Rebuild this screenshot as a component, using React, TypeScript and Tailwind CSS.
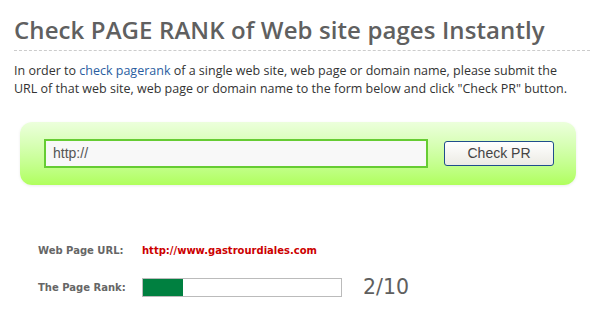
export default function App() {
  const rank = 2;
  return (
    <div className="w-[609px] h-[321px] bg-white overflow-hidden" style={{ fontFamily: '"DejaVu Sans", Verdana, sans-serif' }}>
      <div className="px-[14px] pt-[12px]">
        <h1 className="text-[24px] leading-[36px] font-semibold text-[#606060] font-['Open_Sans',sans-serif] tracking-[0.1px]">
          Check PAGE RANK of Web site pages Instantly
        </h1>
        <div className="mt-[2px] w-[576px] border-t border-dashed border-[#cccccc]" />
        <p className="mt-[11px] w-[590px] text-[12.5px] leading-[18px] text-[#333333] font-['Open_Sans',sans-serif]">
          In order to <a className="text-[#2a5d9f]">check pagerank</a> of a single web site, web page or domain name, please submit the
          <br />
          URL of that web site, web page or domain name to the form below and click "Check PR" button.
        </p>
      </div>

      <div className="ml-[20px] mt-[24px] w-[556px] h-[63px] rounded-[12px] bg-gradient-to-b from-[#ecffdc] to-[#b0ff5c] shadow-[0_1px_3px_rgba(0,0,0,0.08)] flex items-center pl-[24px] pr-[22px] gap-[16px]">
        <div className="w-[384px] h-[29px] border-2 border-[#66cc33] bg-[#f8f8f8] flex items-center pl-[7px] text-[14px] text-[#555555] font-['Liberation_Sans',Arial,sans-serif]">
          http://
        </div>
        <button className="w-[110px] h-[25px] rounded-[3px] border border-[#1f4e8c] bg-gradient-to-b from-white to-[#ecebe4] text-[14px] text-[#444444] font-['Liberation_Sans',Arial,sans-serif]">
          Check PR
        </button>
      </div>

      <div className="ml-[38px] mt-[55px] flex flex-col gap-[17px] text-[10px] font-bold">
        <div className="h-[20px] flex items-center">
          <div className="w-[104px] text-[#666666]">Web Page URL:</div>
          <div className="text-[#cc0000]">http://www.gastrourdiales.com</div>
        </div>
        <div className="h-[20px] flex items-center">
          <div className="w-[104px] text-[#666666]">The Page Rank:</div>
          <div className="w-[200px] h-[19px] border border-[#bbbbbb] bg-white">
            <div className="h-full bg-[#008040]" style={{ width: `${rank * 10}%` }} />
          </div>
          <div className="ml-[21px] text-[20.5px] font-normal text-[#5f5f5f]">{rank}/10</div>
        </div>
      </div>
    </div>
  );
}
